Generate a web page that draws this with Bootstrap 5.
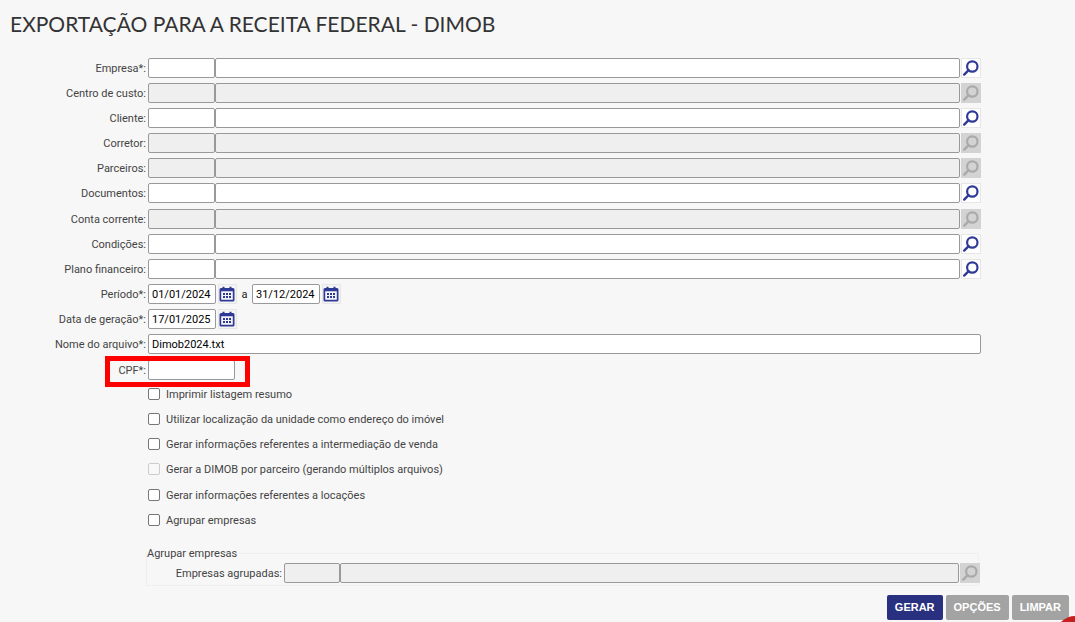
<!DOCTYPE html>
<html lang="pt-BR">
<head>
<meta charset="utf-8">
<meta name="viewport" content="width=device-width, initial-scale=1">
<title>Exportação para a Receita Federal - DIMOB</title>
<link href="https://cdn.jsdelivr.net/npm/bootstrap@5.3.0/dist/css/bootstrap.min.css" rel="stylesheet">
<style>
  body { background: #f7f7f7; color: #444; font: 11px/20px Roboto, "Liberation Sans", sans-serif; overflow-x: hidden; }
  .page-title { font: 400 21px/28px Lato, "Liberation Sans", sans-serif; color: #333; padding: 10px 10px 0; margin-bottom: 20px; }
  .export-form { padding-right: 94px; }
  .field-group { margin-bottom: 6px; }
  .field-group, .check-group { display: flex; flex-direction: column; gap: 5px; }
  .field-label { width: 146px; height: 20px; line-height: 22px; margin-right: 2px; flex: none; text-align: right; }
  .export-form .form-control { height: 20px; min-height: 0; padding: 0 3px; font-size: 11px; line-height: 18px; color: #000; background: #fff; border: 1px solid #999; border-radius: 2px; }
  .export-form .form-control:disabled { background: #efefef; }
  .export-form .code-field { width: 67px; flex: none; }
  .export-form .date-field { width: 68px; flex: none; }
  .export-form .cpf-field { width: 87px; }
  .icon-btn { width: 20px; height: 20px; flex: none; margin-left: 1px; padding: 0; border: 1px solid #e6e6e6; border-radius: 0; background: #fff; color: #2f3a96; display: flex; --bs-btn-disabled-opacity: 1; }
  .icon-btn:disabled { background: #d3d3d3; border-color: #d3d3d3; color: #aaa; }
  .icon-btn svg { width: 18px; height: 18px; }
  .date-btn { width: 19px; margin-left: 2px; background: #f4f4f4; }
  .date-btn svg { width: 17px; }
  .until { width: 15px; height: 20px; line-height: 22px; text-align: center; color: #222; }
  .highlight { left: 105px; top: -4px; width: 145px; height: 31px; border: 5px solid #f00; pointer-events: none; }
  .check-group { padding-left: 148px; margin-top: 4px; }
  .check-group + .check-group { margin-top: 6px; }
  .check-group label { height: 20px; line-height: 22px; }
  .check-group .form-check-input { width: 12px; height: 12px; margin: 0 6px 0 0; float: none; border: 1px solid #767676; border-radius: 2px; flex: none; }
  .check-group .form-check-input:disabled, .check-group .form-check-input:disabled ~ label { opacity: 1; }
  .check-group .form-check-input:disabled { border-color: #ccc; background: #f8f8f8; }
  .group-box { border: 1px solid #efefef; margin: 13px 2px 0 146px; padding: 0 0 2px; }
  .group-box legend { font-size: 11px; height: 20px; line-height: 22px; width: auto; float: none; margin: 0; padding: 0 2px 0 0; }
  .group-box .field-label { width: 135px; }
  .group-box .code-field { width: 56px; }
  .group-box .icon-btn { margin-right: -2px; }
  .actions { gap: 3px; padding: 9px 6px 0; }
  .actions .btn { height: 25px; padding: 0 8px; border: 0; border-radius: 2px; font: bold 11px/25px "Liberation Sans", Arial, sans-serif; color: #fff; background: #a3a3a3; }
  .actions .btn-main { background: #293080; }
  .help-dot { width: 38px; height: 38px; right: -19px; bottom: -32px; background: #c62020; border: 0; }
</style>
</head>
<body>
<svg class="d-none" aria-hidden="true">
  <symbol id="lens" viewBox="0 0 18 18"><circle cx="10.3" cy="7.5" r="5.2" fill="none" stroke="currentColor" stroke-width="2.2"/><path d="M6.6 11.2 2.2 15.6" fill="none" stroke="currentColor" stroke-width="2.4" stroke-linecap="round"/></symbol>
  <symbol id="calendar" viewBox="0 0 17 18"><path fill="currentColor" fill-rule="evenodd" d="M3.500 1.800h2V3h5V1.800h2V3H14a1.500 1.500 0 0 1 1.500 1.500v10.500a1.500 1.500 0 0 1-1.500 1.500H2A1.500 1.500 0 0 1 .5 15V4.500A1.500 1.500 0 0 1 2 3h1.500zM2.200 6.200v8.500h11.600V6.200z"/><path fill="currentColor" d="M4 8h2v2H4zm3 0h2v2H7zm3 0h2v2h-2zM4 11h2v2H4zm3 0h2v2H7zm3 0h2v2h-2z"/></symbol>
</svg>
<main>
  <h1 class="page-title">EXPORTAÇÃO PARA A RECEITA FEDERAL - DIMOB</h1>
  <form>
    <div class="export-form">
      <div class="field-group">
        <div class="d-flex"><label class="field-label" for="empresa">Empresa*:</label><input class="form-control code-field" id="empresa"><input class="form-control" aria-label="Nome da empresa"><button type="button" class="btn icon-btn" aria-label="Buscar empresa"><svg><use href="#lens"/></svg></button></div>
        <div class="d-flex"><label class="field-label" for="centro">Centro de custo:</label><input class="form-control code-field" id="centro" disabled><input class="form-control" aria-label="Nome do centro de custo" disabled><button type="button" class="btn icon-btn" aria-label="Buscar centro de custo" disabled><svg><use href="#lens"/></svg></button></div>
        <div class="d-flex"><label class="field-label" for="cliente">Cliente:</label><input class="form-control code-field" id="cliente"><input class="form-control" aria-label="Nome do cliente"><button type="button" class="btn icon-btn" aria-label="Buscar cliente"><svg><use href="#lens"/></svg></button></div>
        <div class="d-flex"><label class="field-label" for="corretor">Corretor:</label><input class="form-control code-field" id="corretor" disabled><input class="form-control" aria-label="Nome do corretor" disabled><button type="button" class="btn icon-btn" aria-label="Buscar corretor" disabled><svg><use href="#lens"/></svg></button></div>
        <div class="d-flex"><label class="field-label" for="parceiros">Parceiros:</label><input class="form-control code-field" id="parceiros" disabled><input class="form-control" aria-label="Nome do parceiro" disabled><button type="button" class="btn icon-btn" aria-label="Buscar parceiros" disabled><svg><use href="#lens"/></svg></button></div>
        <div class="d-flex"><label class="field-label" for="documentos">Documentos:</label><input class="form-control code-field" id="documentos"><input class="form-control" aria-label="Nome do documento"><button type="button" class="btn icon-btn" aria-label="Buscar documentos"><svg><use href="#lens"/></svg></button></div>
      </div>
      <div class="field-group">
        <div class="d-flex"><label class="field-label" for="conta">Conta corrente:</label><input class="form-control code-field" id="conta" disabled><input class="form-control" aria-label="Nome da conta corrente" disabled><button type="button" class="btn icon-btn" aria-label="Buscar conta corrente" disabled><svg><use href="#lens"/></svg></button></div>
        <div class="d-flex"><label class="field-label" for="condicoes">Condições:</label><input class="form-control code-field" id="condicoes"><input class="form-control" aria-label="Nome da condição"><button type="button" class="btn icon-btn" aria-label="Buscar condições"><svg><use href="#lens"/></svg></button></div>
        <div class="d-flex"><label class="field-label" for="plano">Plano financeiro:</label><input class="form-control code-field" id="plano"><input class="form-control" aria-label="Nome do plano financeiro"><button type="button" class="btn icon-btn" aria-label="Buscar plano financeiro"><svg><use href="#lens"/></svg></button></div>
        <div class="d-flex"><label class="field-label" for="inicio">Período*:</label><input class="form-control date-field" id="inicio" value="01/01/2024"><button type="button" class="btn icon-btn date-btn" aria-label="Escolher data inicial"><svg><use href="#calendar"/></svg></button><label class="until" for="fim">a</label><input class="form-control date-field" id="fim" value="31/12/2024"><button type="button" class="btn icon-btn date-btn" aria-label="Escolher data final"><svg><use href="#calendar"/></svg></button></div>
        <div class="d-flex"><label class="field-label" for="geracao">Data de geração*:</label><input class="form-control date-field" id="geracao" value="17/01/2025"><button type="button" class="btn icon-btn date-btn" aria-label="Escolher data de geração"><svg><use href="#calendar"/></svg></button></div>
        <div class="d-flex"><label class="field-label" for="arquivo">Nome do arquivo*:</label><input class="form-control" id="arquivo" value="Dimob2024.txt"></div>
      </div>
      <div class="d-flex position-relative"><label class="field-label" for="cpf">CPF*:</label><input class="form-control cpf-field" id="cpf"><div class="highlight position-absolute"></div></div>

      <div class="check-group">
        <div class="d-flex align-items-center"><input class="form-check-input" type="checkbox" id="c1"><label for="c1">Imprimir listagem resumo</label></div>
        <div class="d-flex align-items-center"><input class="form-check-input" type="checkbox" id="c2"><label for="c2">Utilizar localização da unidade como endereço do imóvel</label></div>
        <div class="d-flex align-items-center"><input class="form-check-input" type="checkbox" id="c3"><label for="c3">Gerar informações referentes a intermediação de venda</label></div>
        <div class="d-flex align-items-center"><input class="form-check-input" type="checkbox" id="c4" disabled><label for="c4">Gerar a DIMOB por parceiro (gerando múltiplos arquivos)</label></div>
      </div>
      <div class="check-group">
        <div class="d-flex align-items-center"><input class="form-check-input" type="checkbox" id="c5"><label for="c5">Gerar informações referentes a locações</label></div>
        <div class="d-flex align-items-center"><input class="form-check-input" type="checkbox" id="c6"><label for="c6">Agrupar empresas</label></div>
      </div>

      <fieldset class="group-box">
        <legend>Agrupar empresas</legend>
        <div class="d-flex"><label class="field-label" for="agrupadas">Empresas agrupadas:</label><input class="form-control code-field" id="agrupadas" disabled><input class="form-control" aria-label="Nome das empresas agrupadas" disabled><button type="button" class="btn icon-btn" aria-label="Buscar empresas agrupadas" disabled><svg><use href="#lens"/></svg></button></div>
      </fieldset>
    </div>
    <div class="actions d-flex justify-content-end">
      <button type="button" class="btn btn-main">GERAR</button>
      <button type="button" class="btn">OPÇÕES</button>
      <button type="reset" class="btn">LIMPAR</button>
    </div>
  </form>
</main>
<button type="button" class="help-dot position-fixed rounded-circle" aria-label="Ajuda"></button>
<script src="https://cdn.jsdelivr.net/npm/bootstrap@5.3.0/dist/js/bootstrap.bundle.min.js"></script>
</body>
</html>
